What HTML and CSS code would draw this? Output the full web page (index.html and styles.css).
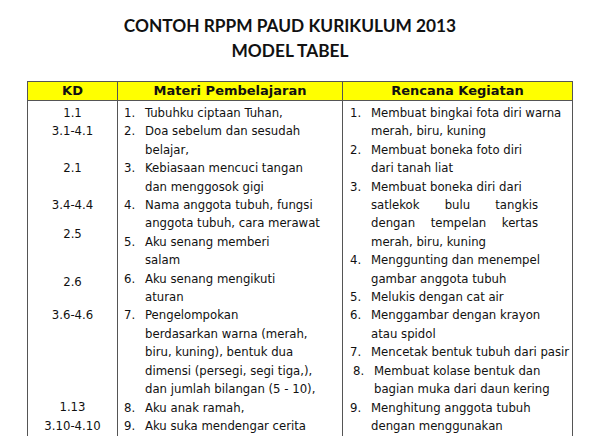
FILE: index.html
```html
<!DOCTYPE html>
<html lang="id">
<head>
<meta charset="utf-8">
<title>Contoh RPPM PAUD Kurikulum 2013</title>
<link rel="stylesheet" href="styles.css">
</head>
<body>
<div class="page">
  <h1 class="title">CONTOH RPPM PAUD KURIKULUM 2013<br>MODEL TABEL</h1>
  <table class="rppm">
    <colgroup>
      <col class="c-kd">
      <col class="c-materi">
      <col class="c-rencana">
    </colgroup>
    <thead>
      <tr>
        <th>KD</th>
        <th>Materi Pembelajaran</th>
        <th>Rencana Kegiatan</th>
      </tr>
    </thead>
    <tbody>
      <tr>
        <td class="kd">
          <div class="kd-item">1.1</div>
          <div class="kd-item">3.1-4.1</div>
          <div class="kd-item gap-1">2.1</div>
          <div class="kd-item gap-1">3.4-4.4</div>
          <div class="kd-item gap-06">2.5</div>
          <div class="kd-item gap-16">2.6</div>
          <div class="kd-item gap-08">3.6-4.6</div>
          <div class="kd-item gap-4">1.13</div>
          <div class="kd-item">3.10-4.10</div>
        </td>
        <td class="materi">
          <div class="item"><span class="num">1.</span><span class="txt">Tubuhku ciptaan Tuhan,</span></div>
          <div class="item"><span class="num">2.</span><span class="txt">Doa sebelum dan sesudah<br>belajar,</span></div>
          <div class="item"><span class="num">3.</span><span class="txt">Kebiasaan mencuci tangan<br>dan menggosok gigi</span></div>
          <div class="item"><span class="num">4.</span><span class="txt">Nama anggota tubuh, fungsi<br>anggota tubuh, cara merawat</span></div>
          <div class="item"><span class="num">5.</span><span class="txt">Aku senang memberi<br>salam</span></div>
          <div class="item"><span class="num">6.</span><span class="txt">Aku senang mengikuti<br>aturan</span></div>
          <div class="item"><span class="num">7.</span><span class="txt">Pengelompokan<br>berdasarkan warna (merah,<br>biru, kuning), bentuk dua<br>dimensi (persegi, segi tiga,),<br>dan jumlah bilangan (5 - 10),</span></div>
          <div class="item"><span class="num">8.</span><span class="txt">Aku anak ramah,</span></div>
          <div class="item"><span class="num">9.</span><span class="txt">Aku suka mendengar cerita</span></div>
        </td>
        <td class="rencana">
          <div class="item"><span class="num">1.</span><span class="txt">Membuat bingkai fota diri warna<br>merah, biru, kuning</span></div>
          <div class="item"><span class="num">2.</span><span class="txt">Membuat boneka foto diri<br>dari tanah liat</span></div>
          <div class="item"><span class="num">3.</span><span class="txt">Membuat boneka diri dari<span class="just">satlekok bulu tangkis</span><span class="just">dengan tempelan kertas</span>merah, biru, kuning</span></div>
          <div class="item"><span class="num">4.</span><span class="txt">Menggunting dan menempel<br>gambar anggota tubuh</span></div>
          <div class="item"><span class="num">5.</span><span class="txt">Melukis dengan cat air</span></div>
          <div class="item"><span class="num">6.</span><span class="txt">Menggambar dengan krayon<br>atau spidol</span></div>
          <div class="item"><span class="num">7.</span><span class="txt">Mencetak bentuk tubuh dari pasir</span></div>
          <div class="item shifted"><span class="num">8.</span><span class="txt">Membuat kolase bentuk dan<br>bagian muka dari daun kering</span></div>
          <div class="item"><span class="num">9.</span><span class="txt">Menghitung anggota tubuh<br>dengan menggunakan</span></div>
        </td>
      </tr>
    </tbody>
  </table>
</div>
</body>
</html>
```

FILE: styles.css
```css
html, body {
  margin: 0;
  padding: 0;
  background: #ffffff;
}

.page {
  width: 600px;
  height: 436px;
  overflow: hidden;
  color: #111111;
}

.title {
  margin: 0;
  padding: 14px 20px 0 0;
  font-family: "Lato", "Liberation Sans", sans-serif;
  font-weight: 700;
  font-size: 17.3px;
  line-height: 24.5px;
  text-align: center;
  color: #111111;
}

.rppm {
  margin: 18px 0 0 27px;
  width: 545px;
  border-collapse: collapse;
  table-layout: fixed;
  font-family: "DejaVu Sans", "Liberation Sans", sans-serif;
  font-stretch: condensed;
  font-size: 13px;
}

.c-kd { width: 90px; }
.c-materi { width: 225px; }
.c-rencana { width: 230px; }

.rppm th,
.rppm td {
  border: 1px solid #555555;
  padding: 0;
}

.rppm th {
  background: #ffff00;
  height: 18px;
  font-stretch: normal;
  font-size: 13px;
  font-weight: 700;
  line-height: 18px;
  text-align: center;
}

.rppm td {
  vertical-align: top;
  padding-top: 3px;
  line-height: 18.4px;
  height: 400px;
}

.kd {
  text-align: center;
}

.gap-1 { margin-top: 18.4px; }
.gap-06 { margin-top: 11px; }
.gap-16 { margin-top: 29.5px; }
.gap-08 { margin-top: 14.7px; }
.gap-4 { margin-top: 73.6px; }

.item {
  display: flex;
}

.materi .item {
  padding-left: 6px;
}

.rencana .item {
  padding-left: 7px;
}

.num {
  flex: 0 0 21px;
}

.txt {
  white-space: nowrap;
}

.just {
  display: block;
  width: 167px;
  text-align: justify;
  text-align-last: justify;
}

.shifted {
  padding-left: 10px !important;
}
```
